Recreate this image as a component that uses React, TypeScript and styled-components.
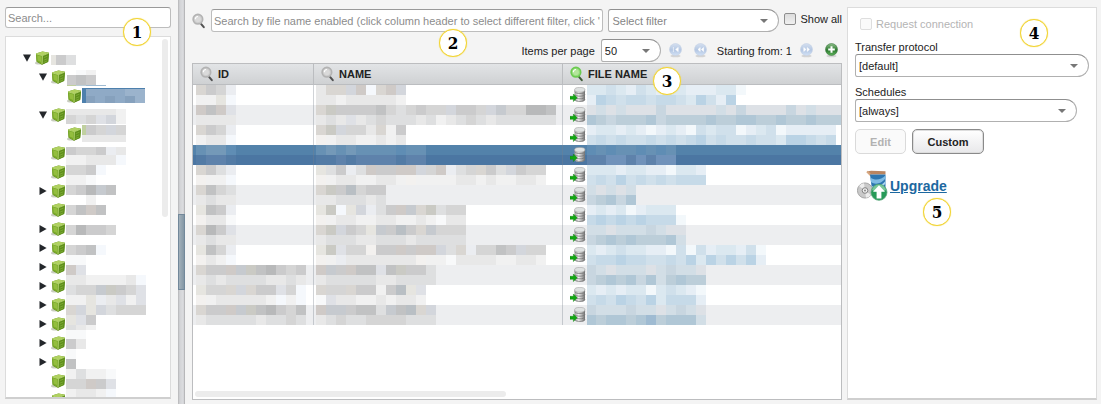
import React from 'react';
import styled, { createGlobalStyle } from 'styled-components';

const GlobalStyle = createGlobalStyle`
  *, *::before, *::after { box-sizing: border-box; }
  html, body { margin: 0; background: #f4f4f4; }
  body, input, select, button {
    font-family: "Liberation Sans", Arial, sans-serif;
    font-size: 11px;
    color: #222;
  }
`;

/* ---------- layout ---------- */

const Page = styled.div`
  display: flex;
  height: 100vh;
  padding: 0 4px 0 5px;
  overflow: hidden;
`;

const Sidebar = styled.aside`
  position: relative;
  display: flex;
  flex-direction: column;
  gap: 8px;
  flex: 0 0 166px;
  padding: 7px 0 5px;
`;

const Splitter = styled.div`
  display: flex;
  flex-direction: column;
  justify-content: center;
  flex: 0 0 7px;
  margin: 0 7px;
  padding-top: 100px;
  background: linear-gradient(90deg, #b4b4b6, #d2d3d6 25%, #dcdde0 75%, #a8a8aa);
`;

const SplitHandle = styled.div`
  height: 76px;
  border: 1px solid #72889a;
  background: linear-gradient(90deg, #a3b1bb, #8497a5);
`;

const Main = styled.main`
  position: relative;
  display: flex;
  flex-direction: column;
  flex: 1 1 0;
  min-width: 0;
  padding: 9px 0 4px;
`;

const Details = styled.section`
  position: relative;
  flex: 0 0 250px;
  margin: 7px 0 4px 5px;
  padding: 10px 7px;
  border: 1px solid #dcdcdc;
  border-bottom: 2px solid #cfcfcf;
  background: #fff;
`;

const Badge = styled.span<{ $x: number; $y: number }>`
  position: absolute;
  z-index: 2;
  left: ${(p) => p.$x}px;
  top: ${(p) => p.$y}px;
  width: 28px;
  height: 28px;
  border: 1px solid #f2d432;
  border-radius: 50%;
  background: #fff;
  box-shadow: 0 0 1px #f2d432;
  color: #000;
  font: bold 17px/26px "DejaVu Serif Condensed", "DejaVu Serif", serif;
  text-align: center;
`;

/* ---------- controls ---------- */

const TextInput = styled.input<{ $h: number }>`
  min-width: 0;
  width: 100%;
  height: ${(p) => p.$h}px;
  padding: 0 2px;
  border: 1px solid #bdbdbd;
  border-top-color: #999;
  border-radius: 3px;
  background: #fff;
  outline: none;
  &::placeholder { color: #8c8c8c; opacity: 1; }
`;

const SelectBox = styled.span<{ $w: number }>`
  position: relative;
  display: block;
  flex: none;
  width: ${(p) => p.$w}px;
  &::after {
    content: "";
    position: absolute;
    right: 11px;
    top: 10px;
    border: 4px solid transparent;
    border-top-color: #777;
    border-bottom: 0;
    pointer-events: none;
  }
`;

const Select = styled.select<{ $muted?: boolean }>`
  appearance: none;
  display: block;
  width: 100%;
  height: 23px;
  padding: 0 20px 0 3px;
  border: 1px solid #b0b0b0;
  border-top-color: #8f8f8f;
  border-radius: 3px 12px 12px 3px;
  background: #fff;
  color: ${(p) => (p.$muted ? '#858585' : '#222')};
`;

const CheckLabel = styled.label`
  display: flex;
  align-items: center;
  gap: 4px;
  flex: none;
`;

const ToolbarCheck = styled(CheckLabel)`
  padding-bottom: 4px;
`;

const DisabledCheck = styled(CheckLabel)`
  padding: 0 0 2px 5px;
  color: #b4b4b4;
`;

const Check = styled.input`
  appearance: none;
  width: 12px;
  height: 12px;
  margin: 0;
  border: 1px solid #8e8e8e;
  border-radius: 2px;
  background: linear-gradient(#dcdcdc, #f0f0f0);
  &:disabled { border-color: #dedede; background: #fafafa; }
`;

const Button = styled.button<{ $w: number }>`
  width: ${(p) => p.$w}px;
  height: 25px;
  padding: 0;
  border: 1px solid #8a8a8a;
  border-radius: 5px;
  background: linear-gradient(#fff, #e8e8ea);
  box-shadow: inset 0 0 0 1px #ddd;
  font-weight: bold;
  &:disabled { color: #b2b2b2; border-color: #dadada; background: #fafafa; box-shadow: none; }
`;

const IconButton = styled.button`
  display: flex;
  flex: none;
  padding: 0;
  border: 0;
  background: none;
`;

/* ---------- sidebar tree ---------- */

const TreePanel = styled.div`
  display: flex;
  flex: 1 1 0;
  min-height: 0;
  border: 1px solid #dcdcdc;
  border-bottom: 2px solid #cfcfcf;
  background: #fff;
  overflow: hidden;
`;

const Tree = styled.ul`
  flex: 1;
  margin: 0;
  padding: 11px 0 0 17px;
  list-style: none;
`;

const TreeRow = styled.li<{ $level: number }>`
  display: flex;
  align-items: center;
  height: 19px;
  padding-left: ${(p) => p.$level * 16}px;
`;

const Twisty = styled.span`
  display: flex;
  width: 12px;
`;

const VScroll = styled.div`
  flex: 0 0 6px;
  height: 178px;
  margin: 2px 2px 0 0;
  border-radius: 3px;
  background: #ececec;
`;

/* ---------- main panel ---------- */

const SearchRow = styled.div`
  display: flex;
  align-items: center;
  gap: 5px;
  height: 23px;
`;

const PagerRow = styled.div`
  display: flex;
  align-items: center;
  justify-content: flex-end;
  gap: 12px;
  height: 23px;
  margin: 7px 4px 1px 0;
`;

const PageSize = styled.label`
  display: flex;
  align-items: center;
  gap: 6px;
  margin-right: -4px;
`;

const PageStart = styled.span`
  margin: 0 -4px 0 -2px;
`;

const Grid = styled.div`
  display: flex;
  flex-direction: column;
  justify-content: space-between;
  flex: 1;
  min-height: 0;
  border: 1px solid #bcbdbf;
  background: #fff;
  overflow: hidden;
`;

const Table = styled.table`
  width: 100%;
  table-layout: fixed;
  border-collapse: separate;
  border-spacing: 0;
`;

const Th = styled.th<{ $w?: number }>`
  width: ${(p) => (p.$w ? p.$w + 'px' : 'auto')};
  height: 21px;
  padding: 0 0 0 7px;
  border-right: ${(p) => (p.$w ? '1px solid #bbbdc0' : '0')};
  border-bottom: 1px solid #bbbdc0;
  background: linear-gradient(#e2e4e6, #cfd1d3);
  text-align: left;
`;

const HeadLabel = styled.span`
  display: flex;
  align-items: center;
  gap: 4px;
`;

const Tr = styled.tr<{ $tone: 'odd' | 'even' | 'selected' }>`
  background: ${(p) =>
    p.$tone === 'selected'
      ? 'linear-gradient(#5382aa 50%, #4b76a2 50%)'
      : p.$tone === 'even' ? '#edeef0' : '#fff'};
`;

const Td = styled.td<{ $last?: boolean }>`
  height: 20px;
  padding: 0;
  border-right: ${(p) => (p.$last ? '0' : '1px solid rgba(120, 130, 140, 0.35)')};
  overflow: hidden;
`;

const FileCell = styled.span`
  display: flex;
  align-items: center;
  gap: 1px;
  padding-left: 7px;
`;

const HScroll = styled.div`
  width: 48%;
  height: 6px;
  margin: 0 0 2px 2px;
  border-radius: 3px;
  background: #ececec;
`;

/* ---------- details panel ---------- */

const Field = styled.label`
  display: flex;
  flex-direction: column;
  margin-top: 9px;
  line-height: 13px;
`;

const ButtonRow = styled.div`
  display: flex;
  gap: 6px;
  margin-top: 7px;
`;

const Upgrade = styled.a`
  display: flex;
  align-items: center;
  gap: 2px;
  margin: 16px 0 0 2px;
  color: #1c68a0;
  font-size: 14px;
  font-weight: bold;
`;

/* ---------- drawings ---------- */

const palette: Record<string, string> = {
  '1': '#f8f9fa', '2': '#f1f1f1', '3': '#e8e8e8', '4': '#dedfe0', '5': '#d5d5d5', '6': '#cbcbcc', '7': '#c1c2c3', '8': '#b8b9ba',
  a: '#f3f1ef', b: '#e6e5e0', c: '#d9d6d2', d: '#cfcac7', e: '#cacac4', g: '#c0d0a0',
  i: '#f5f8fc', j: '#ebedf1', k: '#dfe1e6', l: '#d3d6dc', m: '#c6cacf', n: '#b9bfc4',
  A: '#f3f8fb', B: '#e6eef5', C: '#dbe8f0', D: '#d0e0eb', E: '#c6dae8', F: '#bad3e5',
  O: '#dde1e6', P: '#d2dee6', Q: '#c8d6e0', R: '#bcced9', S: '#b0c7d6', T: '#9fbbd2',
  u: '#5f8db4', v: '#6791b4', w: '#7499b8', x: '#537ba5', y: '#5e82ab', z: '#7092ba',
  U: '#8faac6', V: '#9bb3cc', W: '#86a1bd', X: '#4d80ad',
};

type Band = [y: number, h: number, cells: string, x?: number, first?: number];

const MosaicSvg = styled.svg`
  display: block;
  flex: none;
  overflow: visible;
`;

function Mosaic({ bands, width, height = 20 }: { bands: Band[]; width: number; height?: number }) {
  return (
    <MosaicSvg width={width} height={height} shapeRendering="crispEdges" aria-hidden="true">
      {bands.flatMap(([y, h, cells, x = 0, first = 10], b) =>
        cells.split('').map((c, i) =>
          palette[c] ? (
            <rect key={b + '-' + i} x={i === 0 ? x : x + first + (i - 1) * 10} y={y} width={i === 0 ? first : 10} height={h} fill={palette[c]} />
          ) : null
        )
      )}
    </MosaicSvg>
  );
}

const Icon = styled.svg`
  display: block;
  flex: none;
`;

const Cube = () => (
  <Icon width="15" height="14" viewBox="0 0 15 14" aria-hidden="true">
    <ellipse cx="4.5" cy="12" rx="4.5" ry="1.5" fill="#b9bfae" opacity=".8" />
    <path d="M1 2.5 7.5.4 14 1.8 13.2 11 7 13.8 1.6 10.8Z" fill="#5f8c1c" />
    <path d="M1 2.5 7.5.4 14 1.8 7.4 4.4Z" fill="#b0d160" />
    <path d="M1 2.7 7.4 4.5 7 13.6 1.6 10.6Z" fill="#79a82a" />
    <path d="M2.2 4.2 6.2 5.5 6 11 2.7 9.4Z" fill="#9cc546" opacity=".75" />
    <path d="M7.4 4.5 14 2 13.2 10.8 7 13.6Z" fill="#5f8f1c" />
    <path d="M8.8 6.6 12.4 5.2M8.8 9.2 12.2 7.8M8.6 11.4 12 10" stroke="#7dab34" strokeWidth=".9" />
    <path d="M1.2 2.8 7.4 4.6 13.8 2.1M7.4 4.6 7.1 13.2" fill="none" stroke="#c6e283" strokeWidth=".8" />
  </Icon>
);

const Arrow = ({ open }: { open: boolean }) => (
  <Icon width="8" height="8" viewBox="0 0 8 8" aria-hidden="true">
    <path d={open ? 'M0 .5H8L4 7.8Z' : 'M.5 0V8L7.6 4Z'} fill="#24272b" />
  </Icon>
);

const Magnifier = ({ green }: { green?: boolean }) => (
  <Icon width="14" height="16" viewBox="0 0 14 16" aria-hidden="true">
    <path d="M9 10.8 11.8 14.2" stroke={green ? '#3d5a35' : '#505050'} strokeWidth="2" strokeLinecap="round" />
    <circle cx="5.9" cy="6.2" r="4.7" fill={green ? '#b4e69c' : '#dadada'} stroke={green ? '#6bcb50' : '#b3b3b3'} strokeWidth="1.8" />
    <circle cx="5.9" cy="6.2" r="3.6" fill="none" stroke={green ? '#8cd872' : '#c8c8c8'} strokeWidth=".8" />
    <path d="M3.2 6.2A3 3 0 0 1 6 3.5" stroke="#fff" strokeWidth="1.2" fill="none" />
  </Icon>
);

const Database = () => (
  <Icon width="16" height="16" viewBox="0 0 16 16" aria-hidden="true">
    <defs>
      <linearGradient id="drum">
        <stop offset="0" stopColor="#a4a4a4" />
        <stop offset=".4" stopColor="#f4f4f4" />
        <stop offset="1" stopColor="#707070" />
      </linearGradient>
    </defs>
    <path d="M4.5 2.8V13C5 15.6 14 15.6 15 13V2.8Z" fill="url(#drum)" />
    <path d="M4.6 4.8C6 7.2 14 7.2 15 4.8M4.6 7.4C6 9.8 14 9.8 15 7.4M4.6 10C6 12.4 14 12.4 15 10M4.6 12.6C6 15 14 15 15 12.6" stroke="#777" fill="none" strokeWidth=".8" />
    <ellipse cx="9.8" cy="2.8" rx="5.2" ry="2.4" fill="#dfe2e2" stroke="#a4a4a4" strokeWidth=".6" />
    <path d="M0 9.3H3.4V7L7.2 10.8 3.4 14.6V12.3H0Z" fill="#12a812" stroke="#0a7d0a" strokeWidth=".4" />
  </Icon>
);

const orbGlyphs = {
  first: 'M4.4 4V9M9.2 4.4 6.6 6.5 9.2 8.6Z',
  prev: 'M6.2 4.6 4 6.5 6.2 8.4ZM9.6 4.6 7.4 6.5 9.6 8.4Z',
  next: 'M3.8 4.6 6 6.5 3.8 8.4ZM7.2 4.6 9.4 6.5 7.2 8.4Z',
  add: 'M6.5 3.2V9.8M3.2 6.5H9.8',
};

const Orb = ({ kind }: { kind: keyof typeof orbGlyphs }) => {
  const add = kind === 'add';
  return (
    <Icon width="13" height="15" viewBox="0 0 13 15" aria-hidden="true">
      <defs>
        <linearGradient id={'orb-' + kind} x2="0" y2="1">
          <stop offset="0" stopColor={add ? '#8fbf8b' : '#d5e0f0'} />
          <stop offset=".55" stopColor={add ? '#2d7a30' : '#b4c7e3'} />
          <stop offset="1" stopColor={add ? '#5fb35c' : '#d3e2f6'} />
        </linearGradient>
      </defs>
      <ellipse cx="6.5" cy="13" rx="5" ry="1.3" fill="#ccc" opacity=".8" />
      <circle cx="6.5" cy="6.5" r="6" fill={`url(#orb-${kind})`} stroke={add ? '#3d7a40' : '#c3d0e4'} strokeWidth=".6" />
      <path d={orbGlyphs[kind]} fill="#fff" stroke="#fff" strokeWidth={add ? 2 : 0.6} />
    </Icon>
  );
};

const UpgradeIcon = () => (
  <Icon width="31" height="31" viewBox="0 0 31 31" aria-hidden="true">
    <path d="M10 1.5 13 4.5H28.5V1.2L14 .8Z" fill="#b98560" />
    <path d="M10 1.5 14 5.5" stroke="#d7a780" strokeWidth="2" />
    <path d="M13 4.5H28.5V25L16 27Z" fill="#2d76b0" />
    <path d="M13.4 7.5C18 11 24 10 28.5 5.5V8.5C24 14 18 15 14 12Z" fill="#7fbbe3" />
    <path d="M14.2 16C20 18 25 15 28.5 11V13.5C25 18 20 20 14.6 19Z" fill="#a8d4ef" />
    <circle cx="8" cy="20.5" r="7.6" fill="#c9c9c9" stroke="#8d8d8d" strokeWidth=".7" />
    <path d="M8 20.5 2 16A7.4 7.4 0 0 1 7 13.2ZM8 20.5 14 25A7.4 7.4 0 0 1 9 27.8Z" fill="#ededed" />
    <circle cx="8" cy="20.5" r="2.8" fill="#eee" stroke="#777" strokeWidth=".9" />
    <circle cx="8" cy="20.5" r="1" fill="#888" />
    <circle cx="22" cy="22.3" r="8" fill="#279a58" stroke="#5aa77b" strokeWidth=".8" />
    <path d="M15 20A7.3 7.3 0 0 1 29 20C26 22 18 22 15 20Z" fill="#79c79a" />
    <path d="M22 15.2 28 21.8H24.4V28.6H19.6V21.8H16Z" fill="#fff" />
  </Icon>
);

/* ---------- data ---------- */

interface TreeNode { level: number; state?: 'open' | 'closed'; bands: Band[] }

const nodes: TreeNode[] = [
  { level: 0, state: 'open', bands: [[7, 10, 'b64', 1, 5]] },
  { level: 1, state: 'open', bands: [[3, 5, '012', 0], [8, 10, '676', 1, 9], [18, 1, 'gRTT', 1, 9]] },
  { level: 2, bands: [[2, 15, 'XXXXXXX', 0, 3], [3, 7, 'UUUUVV', 4, 9], [10, 7, 'WUWUWV', 4, 9]] },
  { level: 1, state: 'open', bands: [[4, 6, '333332'], [10, 9, '545kl2']] },
  { level: 2, bands: [[1, 10, 'g65l5', 0, 4], [11, 7, '33333', 0, 4]] },
  { level: 1, bands: [[4, 8, '6556j3'], [12, 10, '22333i']] },
  { level: 1, bands: [[3, 10, '556i'], [13, 10, '221']] },
  { level: 1, state: 'closed', bands: [[4, 10, '568m7'], [14, 10, '002']] },
  { level: 1, bands: [[5, 10, '57d7']] },
  { level: 1, state: 'closed', bands: [[6, 10, '58665']] },
  { level: 1, state: 'closed', bands: [[7, 10, '567i'], [17, 10, '11']] },
  { level: 1, state: 'closed', bands: [[8, 10, 'dk']] },
  { level: 1, state: 'closed', bands: [[-1, 10, '3322223i'], [9, 10, '455me65k']] },
  { level: 1, state: 'closed', bands: [[0, 10, '22bj3k2k'], [10, 10, 'clbl4555']] },
  { level: 1, state: 'closed', bands: [[1, 10, 'bk6'], [11, 5, '432']] },
  { level: 1, state: 'closed', bands: [[-3, 9, '11'], [6, 10, '63']] },
  { level: 1, state: 'closed', bands: [[-3, 10, '1'], [7, 10, '7']] },
  { level: 1, bands: [[-2, 10, '24221'], [8, 10, '55d6k']] },
  { level: 1, bands: [[-1, 9, '2332i']] },
];

type Lines = [top: string, bottom: string];
interface FileRow { id: Lines; name: Lines; file: Lines; selected?: boolean }

const files: FileRow[] = [
  { id: ['c65j', '22bi'], name: ['3ccldicdl', '332333332'], file: ['CCDCBDCBCCBBBCCA', 'BFEDEEDEEDCFDBF'] },
  { id: ['d7dk', '3333'], name: ['ce66667545655l665lm55887', '343k34544434234543444444'], file: ['OPOPOOOQOOOOOPOQOOOOQOPOOO', 'SRQRRRSQRRRRSRRSSRRSRRSRRR'] },
  { id: ['c65j', '233i'], name: ['cel553c26', 'a23322323'], file: ['BCCBCBABCBADCDDABCDABBBBB', 'DEDEDDEDEDEFDEDDEDDCFFEDE'] },
  { id: ['vwwu', 'xyyx'], name: ['vwvwvvvvuvv', 'xxyxyyyyxyy'], file: ['uvuvvuvuv', 'yyzzyzyzz'], selected: true },
  { id: ['c64j', 'a22i'], name: ['b46j4d66ddl5dj45c64l655', 'a23322332a2222332322332'], file: ['CCCBCCBBACCB', 'DEDFDEDEDEEE'] },
  { id: ['c754', '3433'], name: ['ce6n566', '3344434'], file: ['POPOP', 'QRSQS'] },
  { id: ['b76j', 'a331'], name: ['beiblj46dmce455', 'a23322332232133'], file: ['BCBCABCCC', 'EFEFEFEEEA'] },
  { id: ['c86k', '3433'], name: ['cel65bm6n6cm555', '344433444344444'], file: ['PPOPPPQPOO', 'QRSRSRRRSP'] },
  { id: ['b75j', 'a32i'], name: ['bek55a66d6ddl4cj5576l55', 'a2j3333333a221333322332'], file: ['CBCDCCBBADADBCCBDA', 'DEEFEEDDEDFCFDFDFB'] },
  { id: ['c66dme78656', '34344443343'], name: ['dm6d77k7e664', '344444334444'], file: ['QPOPPPOPQPPO', 'QRSRSQSPRSRR'] },
  { id: ['b55clc66k5i', 'a2333332i2i'], name: ['c55c6626nbk', '1k332232332'], file: ['CBCBCCACDCBA', 'DEDFEDFCEEEB'] },
  { id: ['c66dme78657', '34444434454'], name: ['dmm6774m7ncl', '345445555444'], file: ['QPPPQPPOPQPO', 'SRSSRSTRSSSP'] },
];

const lines = ([top, bottom]: Lines, x = 0, first = 10): Band[] => [
  [0, 10, top, x, first],
  [10, 10, bottom, x, first],
];

/* ---------- page ---------- */

export default function App() {
  return (
    <>
      <GlobalStyle />
      <Page>
        <Sidebar>
          <TextInput $h={21} type="text" placeholder="Search..." aria-label="Search" />
          <TreePanel>
            <Tree>
              {nodes.map((n, i) => (
                <TreeRow key={i} $level={n.level}>
                  <Twisty>{n.state && <Arrow open={n.state === 'open'} />}</Twisty>
                  <Cube />
                  <Mosaic bands={n.bands} width={60} height={19} />
                </TreeRow>
              ))}
            </Tree>
            <VScroll />
          </TreePanel>
          <Badge $x={118} $y={18}>1</Badge>
        </Sidebar>

        <Splitter><SplitHandle /></Splitter>

        <Main>
          <SearchRow>
            <Magnifier />
            <TextInput
              $h={23}
              type="text"
              aria-label="Search files"
              placeholder="Search by file name enabled (click column header to select different filter, click 'i"
            />
            <SelectBox $w={171}>
              <Select $muted aria-label="Filter"><option>Select filter</option></Select>
            </SelectBox>
            <ToolbarCheck><Check type="checkbox" />Show all</ToolbarCheck>
          </SearchRow>
          <PagerRow>
            <PageSize>
              Items per page
              <SelectBox $w={60}><Select><option>50</option></Select></SelectBox>
            </PageSize>
            <IconButton aria-label="First page"><Orb kind="first" /></IconButton>
            <IconButton aria-label="Previous page"><Orb kind="prev" /></IconButton>
            <PageStart>Starting from: 1</PageStart>
            <IconButton aria-label="Next page"><Orb kind="next" /></IconButton>
            <IconButton aria-label="Add"><Orb kind="add" /></IconButton>
          </PagerRow>
          <Grid>
            <Table>
              <thead>
                <tr>
                  <Th $w={121}><HeadLabel><Magnifier />ID</HeadLabel></Th>
                  <Th $w={249}><HeadLabel><Magnifier />NAME</HeadLabel></Th>
                  <Th><HeadLabel><Magnifier green />FILE NAME</HeadLabel></Th>
                </tr>
              </thead>
              <tbody>
                {files.map((f, i) => (
                  <Tr key={i} $tone={f.selected ? 'selected' : i % 2 ? 'even' : 'odd'}>
                    <Td><Mosaic bands={lines(f.id, 3)} width={113} /></Td>
                    <Td><Mosaic bands={lines(f.name, 2)} width={242} /></Td>
                    <Td $last>
                      <FileCell>
                        <Database />
                        <Mosaic bands={lines(f.file, 0, 9)} width={254} />
                      </FileCell>
                    </Td>
                  </Tr>
                ))}
              </tbody>
            </Table>
            <HScroll />
          </Grid>
          <Badge $x={247} $y={29}>2</Badge>
          <Badge $x={461} $y={67}>3</Badge>
        </Main>

        <Details>
          <DisabledCheck><Check type="checkbox" disabled />Request connection</DisabledCheck>
          <Field>
            Transfer protocol
            <SelectBox $w={234}><Select><option>[default]</option></Select></SelectBox>
          </Field>
          <Field>
            Schedules
            <SelectBox $w={222}><Select><option>[always]</option></Select></SelectBox>
          </Field>
          <ButtonRow>
            <Button $w={51} disabled>Edit</Button>
            <Button $w={72}>Custom</Button>
          </ButtonRow>
          <Upgrade href="#upgrade"><UpgradeIcon />Upgrade</Upgrade>
          <Badge $x={172} $y={11}>4</Badge>
          <Badge $x={75} $y={190}>5</Badge>
        </Details>
      </Page>
    </>
  );
}
